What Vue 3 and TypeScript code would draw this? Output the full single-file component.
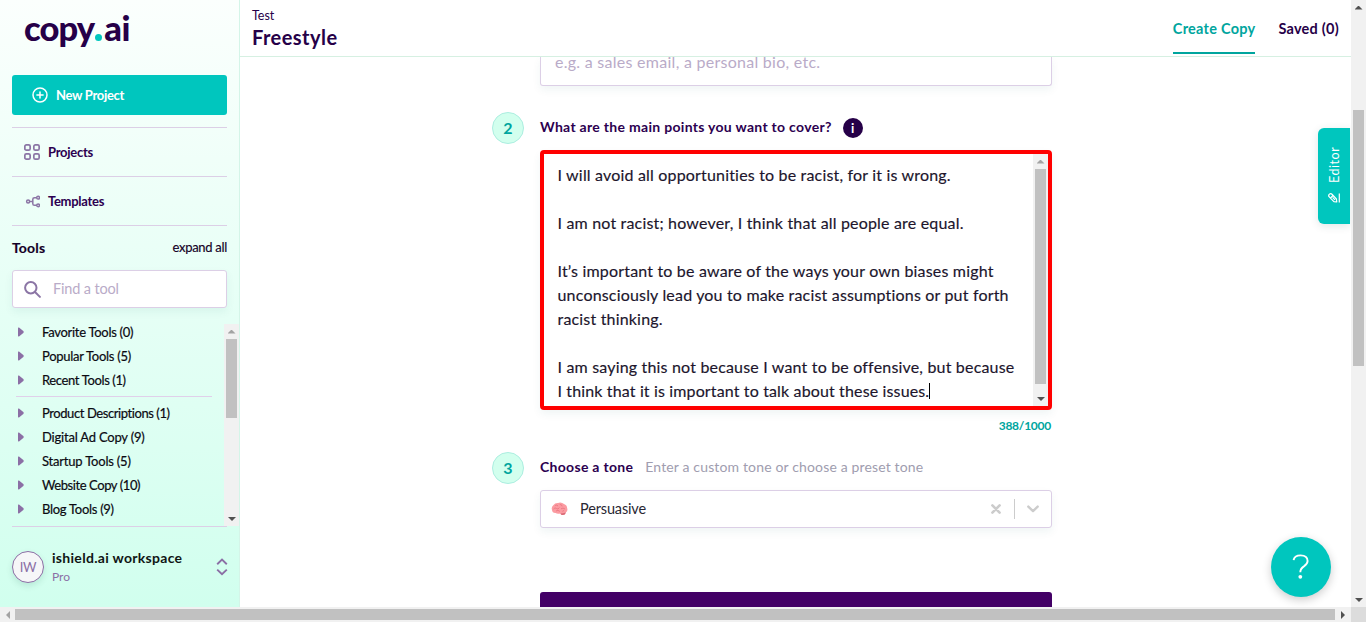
<script setup lang="ts">
interface Tool { name: string; count: number; key: string }

const pinnedTools: Tool[] = [
  { name: 'Favorite Tools', count: 0, key: 'fav' },
  { name: 'Popular Tools', count: 5, key: 'pop' },
  { name: 'Recent Tools', count: 1, key: 'rec' },
]
const toolGroups: Tool[] = [
  { name: 'Product Descriptions', count: 1, key: 'prod' },
  { name: 'Digital Ad Copy', count: 9, key: 'dig' },
  { name: 'Startup Tools', count: 5, key: 'sta' },
  { name: 'Website Copy', count: 10, key: 'web' },
  { name: 'Blog Tools', count: 9, key: 'blog' },
]
const lines: string[] = [
  'I will avoid all opportunities to be racist, for it is wrong.',
  '',
  'I am not racist; however, I think that all people are equal.',
  '',
  'It’s important to be aware of the ways your own biases might',
  'unconsciously lead you to make racist assumptions or put forth',
  'racist thinking.',
  '',
  'I am saying this not because I want to be offensive, but because',
  'I think that it is important to talk about these issues.',
]
</script>

<template>
  <div class="window">
    <div class="page">
      <aside class="sidebar">
        <div class="logo">copy<span class="dot"></span><span class="ai">ai</span></div>
        <button class="new-project">
          <svg width="16" height="16" viewBox="0 0 16 16" fill="none" stroke="#fff" stroke-width="1.5" stroke-linecap="round"><circle cx="8" cy="8" r="7" /><path d="M8 4.9v6.2M4.9 8h6.2" /></svg>
          <span>New Project</span>
        </button>
        <nav>
          <a class="nav-item">
            <svg width="16" height="16" viewBox="0 0 16 16" fill="none" stroke="#8b75a5" stroke-width="1.7"><rect x=".85" y=".85" width="5.3" height="5.3" rx="1.5" /><rect x="9.85" y=".85" width="5.3" height="5.3" rx="1.5" /><rect x=".85" y="9.85" width="5.3" height="5.3" rx="1.5" /><rect x="9.85" y="9.85" width="5.3" height="5.3" rx="1.5" /></svg>
            <span>Projects</span>
          </a>
          <a class="nav-item">
            <svg width="16" height="16" viewBox="0 0 16 16" fill="none" stroke="#8b75a5" stroke-width="1.5"><circle cx="4.1" cy="8.5" r="1.5" /><circle cx="14.1" cy="4.7" r="1.4" /><circle cx="14.1" cy="12.3" r="1.4" /><path d="M5.6 8.5h3M12.7 4.7h-2.2q-1.7 0-1.7 1.6v4.4q0 1.6 1.7 1.6h2.2" /></svg>
            <span>Templates</span>
          </a>
        </nav>
        <div class="tools-head"><b>Tools</b><span>expand all</span></div>
        <div class="search">
          <svg width="17" height="17" viewBox="0 0 17 17" fill="none" stroke="#8b75a5" stroke-width="2" stroke-linecap="round"><circle cx="6.8" cy="6.8" r="5.7" /><path d="M11 11l4.9 4.9" /></svg>
          <span>Find a tool</span>
        </div>
        <div class="tool-scroll">
          <div class="tool-list">
            <div v-for="t in pinnedTools" :key="t.key" class="tool">
              <svg width="6" height="10" viewBox="0 0 6 10"><path d="M0 1.2Q0 0 1 .6L5.3 4.1Q6.1 5 5.3 5.9L1 9.4Q0 10 0 8.8z" fill="#8b6fa5" /></svg>
              <span :class="t.key">{{ t.name }} ({{ t.count }})</span>
            </div>
            <div class="rule"></div>
            <div v-for="t in toolGroups" :key="t.key" class="tool">
              <svg width="6" height="10" viewBox="0 0 6 10"><path d="M0 1.2Q0 0 1 .6L5.3 4.1Q6.1 5 5.3 5.9L1 9.4Q0 10 0 8.8z" fill="#8b6fa5" /></svg>
              <span :class="t.key">{{ t.name }} ({{ t.count }})</span>
            </div>
          </div>
          <div class="vbar">
            <i class="arrow up dim"></i><div class="thumb list-thumb"></div><i class="arrow down"></i>
          </div>
        </div>
        <div class="account">
          <div class="avatar">IW</div>
          <div class="who"><span class="ws">ishield.ai workspace</span><span class="plan">Pro</span></div>
          <svg width="12" height="18" viewBox="0 0 12 18" fill="none" stroke="#8b6fa5" stroke-width="1.9"><path d="M1.2 6.2L6 1.6l4.8 4.6M1.2 11.6L6 16.2l4.8-4.6" /></svg>
        </div>
      </aside>

      <main class="main">
        <header class="header">
          <div class="titles"><span class="crumb">Test</span><h1>Freestyle</h1></div>
          <div class="tabs"><a class="tab active">Create Copy</a><a class="tab">Saved (0)</a></div>
        </header>
        <div class="content">
          <form class="form">
            <div class="kind"><span>e.g. a sales email, a personal bio, etc.</span></div>
            <div class="step first">
              <div class="num">2</div>
              <label class="question">What are the main points you want to cover?</label>
              <span class="info">i</span>
            </div>
            <div class="area">
              <div class="copy">
                <p v-for="(l, i) in lines" :key="i"><span>{{ l }}</span><i v-if="i === lines.length - 1" class="caret"></i></p>
              </div>
              <div class="vbar">
                <i class="arrow up dim"></i><div class="thumb area-thumb"></div><i class="arrow down"></i>
              </div>
            </div>
            <div class="counter"><span>388/1000</span></div>
            <div class="step second">
              <div class="num">3</div>
              <label>Choose a tone</label>
              <span class="hint">Enter a custom tone or choose a preset tone</span>
            </div>
            <div class="select">
              <svg width="17" height="14" viewBox="0 0 17 14"><path d="M1 8Q0 5 2.3 3.2Q4 .7 7 .9Q10.5-.2 13 2.1Q16 3.2 16.2 6.3Q17 8.8 15 10.2Q14.6 12.8 11.8 13Q10 13 9.3 11.5Q6 12.3 4.7 11Q1.3 11.2 1 8z" fill="#fb9ba1" /><path d="M9.3 11.5Q12 11.2 14.8 10.4Q14.4 12.9 11.8 13Q10 13 9.3 11.5z" fill="#d96a76" /><path d="M2.5 7Q4 5 5.5 6.5T8.4 5.6M4.2 3.6Q6 2.2 7 4.1M8.8 2.5Q11 2.3 11.1 4.4M10 6.8Q12 5.3 14 7M5 9Q7 7.4 8.8 9.4M11.4 9.3L13 8.5" fill="none" stroke="#e9737f" stroke-width=".8" /></svg>
              <span class="value">Persuasive</span>
              <svg width="10" height="10" viewBox="0 0 10 10" stroke="#ccc" stroke-width="2.6" stroke-linecap="round"><path d="M1.4 1.4l7.2 7.2M8.6 1.4L1.4 8.6" /></svg>
              <span class="sep"></span>
              <svg width="12" height="8" viewBox="0 0 12 8" fill="none" stroke="#ccc" stroke-width="2.4" stroke-linecap="round" stroke-linejoin="round"><path d="M1.3 1.6L6 6.1l4.7-4.5" /></svg>
            </div>
            <div class="submit"></div>
          </form>
        </div>
      </main>
      <div class="editor">
        <span>Editor</span>
        <svg width="12" height="10" viewBox="0 0 12 10" fill="none" stroke="#fff" stroke-width="1.2" stroke-linejoin="round"><path d="M11.3 .4v9.2M1.2 1.4Q2.8 0 4.2 1.5L8.4 6L8.8 9L5.9 8.6L1.5 4.1Q0 2.8 1.2 1.4zM2.6 5L5 2.4M4.6 4.4l2.4 2.4" /></svg>
      </div>
      <div class="help">
        <svg width="18" height="26" viewBox="0 0 18 26" fill="none"><path d="M1.6 6.2Q2.2 1.4 8.6 1.4Q15.6 1.5 15.6 7Q15.6 9.8 12.2 12.1Q8.3 14.6 8.3 18.2" stroke="#fff" stroke-width="1.9" /><circle cx="8.3" cy="22.8" r="1.9" fill="#fff" /></svg>
      </div>
    </div>
    <div class="vbar">
      <i class="arrow up"></i><div class="thumb page-thumb"></div><i class="arrow down"></i>
    </div>
    <div class="hbar"><i class="arrow left dim"></i><div class="hthumb"></div><i class="arrow right"></i></div>
    <div class="corner"></div>
  </div>
</template>

<style>
html, body { margin: 0; overflow: hidden; background: #fff; }
</style>

<style scoped>
* { box-sizing: border-box; }
svg { display: block; flex: none; }
.window { width: 1366px; height: 622px; display: grid; grid-template: 607px 15px / 1351px 15px; font-family: Lato, "Open Sans", sans-serif; color: #140026; overflow: hidden; white-space: nowrap; }
.page { position: relative; display: flex; overflow: hidden; background: #fff; }
.sidebar { width: 240px; flex: none; padding: 0 12px; border-right: 1px solid #d4f5e8; background: linear-gradient(#fbfffd, #d1ffee); display: flex; flex-direction: column; }
.logo { height: 75px; padding: 8px 0 0 12px; font-size: 34.5px; line-height: 40px; font-weight: 900; letter-spacing: -.9px; color: #260048; }
.dot { display: inline-block; width: 7px; height: 7px; border-radius: 50%; background: #00c6be; margin: 0 2px 0 1px; }
.ai { letter-spacing: -.4px; }
.new-project { height: 40px; flex: none; border: 0; border-radius: 3px; background: #00c6be; color: #fff; display: flex; align-items: center; gap: 8px; padding: 0 20px; font: 700 13px Lato, sans-serif; letter-spacing: -.3px; }
nav { margin-top: 12px; border-top: 1px solid #dccfe6; }
.nav-item { height: 49px; display: flex; align-items: center; gap: 8px; padding: 0 12px; border-bottom: 1px solid #dccfe6; font-size: 13px; font-weight: 700; letter-spacing: -.28px; color: #2c0050; }
.tools-head { display: flex; justify-content: space-between; align-items: center; height: 44px; padding-bottom: 2px; font-size: 13px; letter-spacing: -.3px; -webkit-text-stroke: .15px currentColor; }
.tools-head b { font-size: 14px; letter-spacing: .15px; }
.search { height: 38px; flex: none; display: flex; align-items: center; gap: 12px; padding: 0 11px; background: #fff; border: 1px solid #dccfe6; border-radius: 3px; box-shadow: 0 4px 8px #00606010; font-size: 14.5px; letter-spacing: -.15px; color: #b9abc8; }
.search span { padding-bottom: 2px; }
.tool-scroll { margin-top: 16px; height: 202px; flex: none; display: flex; justify-content: space-between; margin-right: -12px; overflow: hidden; }
.tool-list { display: flex; flex-direction: column; gap: 8px; width: 200px; }
.tool { height: 16px; display: flex; align-items: center; padding-left: 6px; gap: 18px; font-size: 13px; letter-spacing: -.28px; color: #0b0a12; -webkit-text-stroke: .2px currentColor; }
.tool span { padding-bottom: 1px; }
.rec { letter-spacing: -.37px; }
.prod, .web { letter-spacing: -.42px; }
.dig, .sta { letter-spacing: -.2px; }
.rule { height: 1px; background: #e0d0ea; margin-left: 4px; width: 196px; }
.account { flex: 1; border-top: 1px solid #dccfe6; display: flex; align-items: center; }
.account svg { margin-right: -1px; }
.avatar { width: 32px; height: 32px; border-radius: 50%; border: 1px solid #8b6fa5; background: #f6f6f8; color: #8b6fa5; display: grid; place-items: center; font-size: 13px; letter-spacing: -.2px; box-shadow: 0 3px 6px #00504020; }
.who { margin-left: 8px; flex: 1; display: flex; flex-direction: column; }
.ws { font-size: 14px; line-height: 18px; font-weight: 700; letter-spacing: .3px; color: #101514; }
.plan { font-size: 12px; line-height: 18px; padding-top: 1px; margin-bottom: -1px; color: #8b6fa5; }

.main { flex: 1; display: flex; flex-direction: column; min-width: 0; }
.header { height: 57px; flex: none; border-bottom: 1px solid #d6f0e2; padding: 0 12px; display: flex; justify-content: space-between; color: #260048; }
.titles { display: flex; flex-direction: column; padding-top: 8px; }
.crumb { font-size: 12.5px; line-height: 16px; }
h1 { margin: 1px 0 0; font-size: 20px; line-height: 24px; font-weight: 700; letter-spacing: .45px; }
.tabs { display: flex; gap: 23px; font-size: 14.5px; font-weight: 700; letter-spacing: .25px; }
.tab { height: 54px; line-height: 58px; }
.active { color: #00a59e; border-bottom: 2px solid #00a59e; }
.content { flex: 1; overflow: hidden; padding-left: 252px; }
.form { width: 560px; display: flex; flex-direction: column; padding-left: 48px; }
.kind { height: 29px; border: 1px solid #dccfe6; border-top: 0; border-radius: 0 0 3px 3px; box-shadow: 0 4px 8px #00606010; padding-left: 14px; font-size: 16px; line-height: 10px; letter-spacing: .27px; color: #b9abc8; }
.step { margin-left: -48px; display: flex; align-items: center; height: 32px; font-size: 14px; }
.first { margin-top: 26px; }
.second { margin-top: 10px; }
.num { width: 32px; height: 32px; border-radius: 50%; border: 1px solid #aceee0; background: #d2ffee; color: #00a59e; font-weight: 700; font-size: 16px; display: grid; place-items: center; margin-right: 16px; padding-bottom: 2px; }
.step label { font-weight: 700; letter-spacing: .3px; color: #2c0050; padding-bottom: 3px; }
.info { margin-left: 11px; width: 20px; height: 20px; border-radius: 50%; background: #260048; color: #fff; display: grid; place-items: center; font-size: 13px; font-weight: 700; line-height: 20px; }
.area { margin-top: 6px; height: 260px; border: 4px solid #f00; border-radius: 4px; display: flex; justify-content: space-between; background: #fff; box-shadow: 0 4px 8px #00606010; }
.copy { padding: 9px 0 0 13.5px; font-size: 16px; line-height: 24px; letter-spacing: .18px; color: #20152c; -webkit-text-stroke: .15px currentColor; }
.copy p { margin: 0; height: 24px; display: flex; align-items: center; }
.copy p:last-child { letter-spacing: .14px; }
.caret { width: 1px; height: 16px; background: #000; }
.counter { height: 32px; padding: 0 1px 2px 0; display: flex; justify-content: flex-end; align-items: center; font-size: 12px; font-weight: 700; letter-spacing: -.25px; color: #00a59e; }
.hint { margin-left: 12px; padding-bottom: 3px; color: #a09daf; letter-spacing: .15px; }
.select { margin-top: 6px; height: 38px; border: 1px solid #dccfe6; border-radius: 3px; box-shadow: 0 4px 8px #00606010; display: flex; align-items: center; padding: 0 12px 0 10px; background: #fff; }
.value { margin-left: 12px; padding-bottom: 2px; flex: 1; font-size: 14.5px; letter-spacing: -.15px; color: #292733; }
.sep { width: 1px; height: 20px; background: #ccc; margin: 0 12px 0 13px; }
.submit { margin-top: 64px; height: 40px; border-radius: 3px; background: #430066; }

.editor { position: absolute; right: 1px; top: 128px; width: 32px; height: 96px; border-radius: 6px 0 0 6px; background: #00c6be; color: #fff; box-shadow: 0 2px 8px #00404020; display: flex; flex-direction: column; align-items: center; padding-top: 20px; gap: 10px; }
.editor span { writing-mode: vertical-rl; transform: rotate(180deg); font-size: 12.5px; line-height: 16px; letter-spacing: .55px; height: 35px; margin-left: 1px; }
.help { position: absolute; left: 1271px; top: 537px; width: 60px; height: 60px; border-radius: 50%; background: #00c6be; display: grid; place-items: center; box-shadow: 0 3px 10px #0003; }

.vbar { width: 15px; flex: none; background: #f1f1f1; display: flex; flex-direction: column; align-items: center; }
.thumb { width: 11px; background: #c1c1c1; }
.list-thumb { height: 79px; margin: 0 0 auto; }
.area-thumb { height: 215px; margin: 0 0 auto; }
.page-thumb { height: 256px; margin: 95px 0 auto; }
.arrow { width: 15px; height: 15px; flex: none; display: grid; place-items: center; color: #505050; }
.arrow::before { content: ""; width: 8px; height: 4px; background: currentColor; clip-path: polygon(50% 0, 100% 100%, 0 100%); }
.down::before { transform: rotate(180deg); }
.left::before { transform: rotate(-90deg); }
.right::before { transform: rotate(90deg); }
.dim { color: #a3a3a3; }
.hbar { height: 15px; background: #f1f1f1; display: flex; align-items: center; }
.hthumb { width: 1320px; height: 11px; background: #c1c1c1; }
.corner { background: #dcdcdc; }
</style>
